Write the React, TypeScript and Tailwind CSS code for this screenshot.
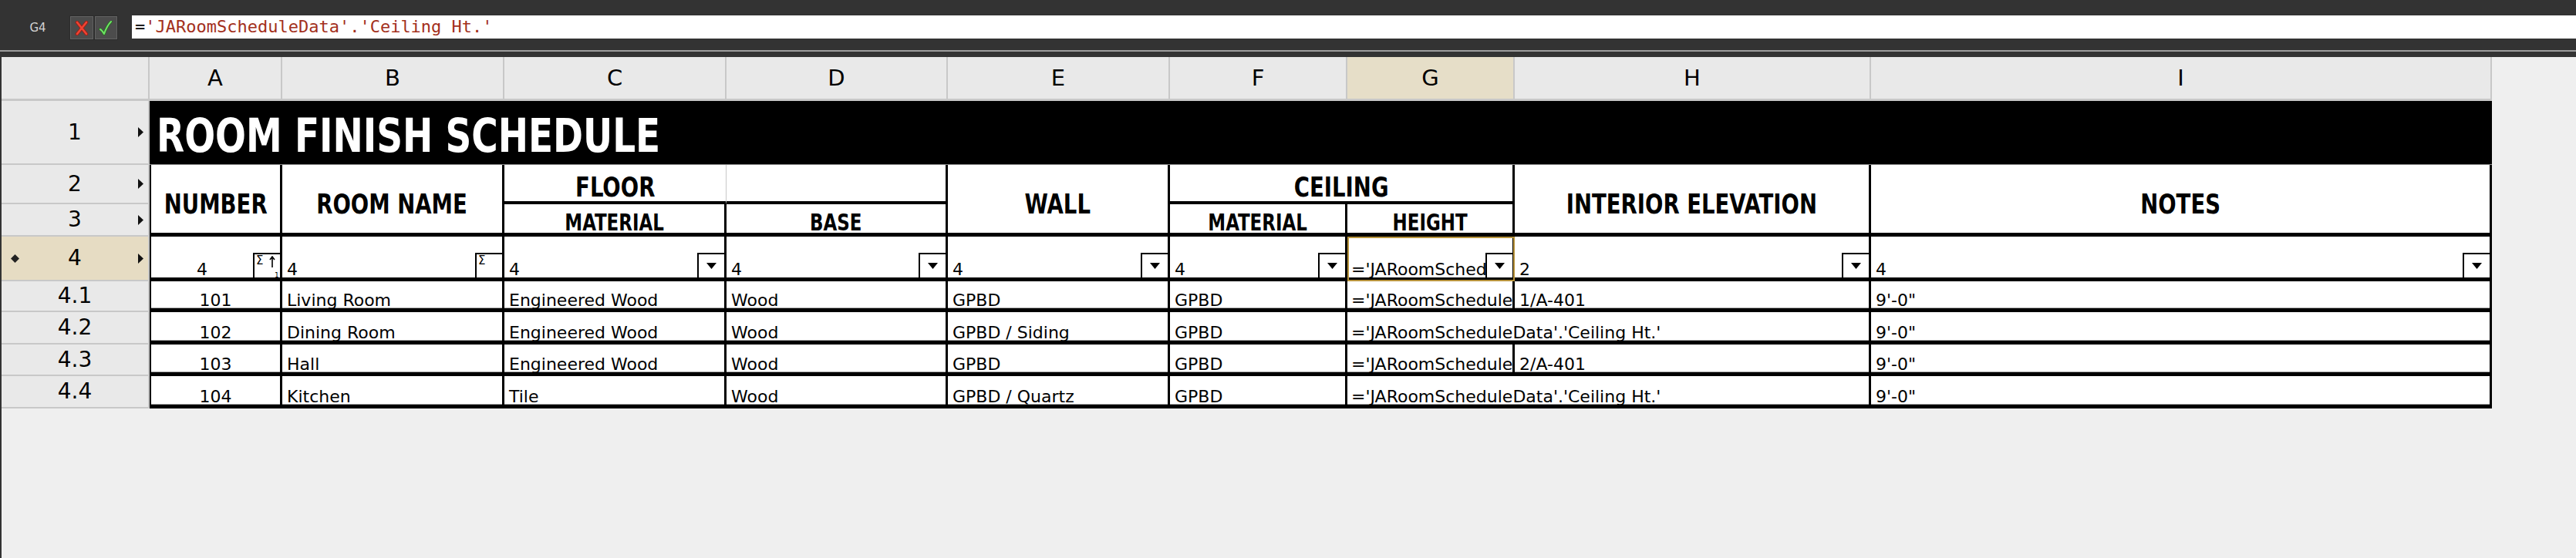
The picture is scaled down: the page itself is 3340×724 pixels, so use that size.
import React from "react";

// fonts: body text is DejaVu, header labels are condensed bold squeezed a bit more
const HEAD =
  "font-['DejaVu_Sans_Condensed','DejaVu_Sans',sans-serif] font-bold text-black leading-none whitespace-nowrap inline-block scale-x-[0.85]";
const BODY =
  "font-['DejaVu_Sans',sans-serif] text-[22px] text-black leading-none whitespace-nowrap";
const GRIDFONT = "font-['DejaVu_Sans',sans-serif] leading-none text-black";

const cell =
  "relative flex overflow-hidden bg-white border-r-[3px] border-b-[5px] border-black";
const line = "shadow-[inset_0_-1px_0_#a8a8a8]";

const FORMULA = "='JARoomScheduleData'.'Ceiling Ht.'";

type Room = {
  row: string;
  label: string;
  num: string;
  name: string;
  floor: string;
  base: string;
  wall: string;
  ceil: string;
  elev: string;
  notes: string;
};

const rooms: Room[] = [
  { row: "row-start-6", label: "4.1", num: "101", name: "Living Room", floor: "Engineered Wood", base: "Wood", wall: "GPBD", ceil: "GPBD", elev: "1/A-401", notes: `9'-0"` },
  { row: "row-start-7", label: "4.2", num: "102", name: "Dining Room", floor: "Engineered Wood", base: "Wood", wall: "GPBD / Siding", ceil: "GPBD", elev: "", notes: `9'-0"` },
  { row: "row-start-8", label: "4.3", num: "103", name: "Hall", floor: "Engineered Wood", base: "Wood", wall: "GPBD", ceil: "GPBD", elev: "2/A-401", notes: `9'-0"` },
  { row: "row-start-9", label: "4.4", num: "104", name: "Kitchen", floor: "Tile", base: "Wood", wall: "GPBD / Quartz", ceil: "GPBD", elev: "", notes: `9'-0"` },
];

const colHeads = [
  { l: "A", c: "col-start-2" },
  { l: "B", c: "col-start-3" },
  { l: "C", c: "col-start-4" },
  { l: "D", c: "col-start-5" },
  { l: "E", c: "col-start-6" },
  { l: "F", c: "col-start-7" },
  { l: "G", c: "col-start-8" },
  { l: "H", c: "col-start-9" },
  { l: "I", c: "col-start-10" },
];

function Arrow() {
  return (
    <svg className="absolute right-[6px]" width="7" height="13" viewBox="0 0 7 13">
      <path d="M0 0L7 6.5L0 13z" fill="#111" />
    </svg>
  );
}

function RowHead({ row, label, arrow, active }: { row: string; label: string; arrow?: boolean; active?: boolean }) {
  return (
    <div
      className={`${row} col-start-1 relative flex items-center justify-center border-r-2 border-b-2 border-[#c8c8c8] ${
        active ? "bg-[#e6dcc3]" : "bg-[#e9e9e9]"
      }`}
    >
      {active && (
        <svg className="absolute left-[12px]" width="11" height="11" viewBox="0 0 11 11">
          <path d="M5.5 0L11 5.5L5.5 11L0 5.5z" fill="#222" />
        </svg>
      )}
      <span className={`${GRIDFONT} text-[28px]`}>{label}</span>
      {arrow && <Arrow />}
    </div>
  );
}

function DropButton({ kind }: { kind?: "sort" | "sum" }) {
  return (
    <div className="absolute right-0 bottom-0 w-[35px] h-[32px] bg-white border-l-2 border-t-2 border-black flex items-center justify-center">
      {kind === undefined && (
        <svg width="13" height="8" viewBox="0 0 13 8">
          <path d="M0 0h13L6.5 8z" fill="#000" />
        </svg>
      )}
      {kind === "sum" && (
        <span className="absolute left-[2px] top-[1px] font-['DejaVu_Sans',sans-serif] text-[15px] leading-none">Σ</span>
      )}
      {kind === "sort" && (
        <>
          <span className="absolute left-[2px] top-[1px] font-['DejaVu_Sans',sans-serif] text-[15px] leading-none">Σ</span>
          <svg className="absolute left-[19px] top-[2px]" width="8" height="16" viewBox="0 0 8 16">
            <path d="M4 1V15M1 5L4 1L7 5" fill="none" stroke="#000" strokeWidth="1.6" />
          </svg>
          <span className="absolute left-[26px] bottom-[-2px] font-['DejaVu_Sans',sans-serif] text-[9px] leading-none">1</span>
        </>
      )}
    </div>
  );
}

function Toolbar() {
  return (
    <div className="flex flex-col">
      <div className="h-[65px] bg-[#333333] flex items-start pt-[20px]">
        <div className="w-[90px] h-[32px] flex items-center justify-center pl-[8px] font-['DejaVu_Sans',sans-serif] text-[15px] text-[#d4d4d4]">
          G4
        </div>
        <div className="w-[63px] h-[32px] flex gap-[2px] p-[1px] bg-[#2c2c2c]">
          <div className="flex-1 bg-[#4c4c4c] border border-[#626262] flex items-center justify-center">
            <svg width="18" height="19" viewBox="0 0 18 19">
              <path d="M3 2L15 17M15 2L3 17" stroke="#9b1d14" strokeWidth="4.4" strokeLinecap="round" />
              <path d="M3 2L15 17M15 2L3 17" stroke="#ee4433" strokeWidth="2.6" strokeLinecap="round" />
            </svg>
          </div>
          <div className="flex-1 bg-[#4c4c4c] border border-[#626262] flex items-center justify-center">
            <svg width="18" height="19" viewBox="0 0 18 19">
              <path d="M2 11C4 12 5.5 14.5 7 17C9 11 12 5 16 1" fill="none" stroke="#2a6a22" strokeWidth="3.6" strokeLinecap="round" strokeLinejoin="round" />
              <path d="M2 11C4 12 5.5 14.5 7 17C9 11 12 5 16 1" fill="none" stroke="#6ee265" strokeWidth="2" strokeLinecap="round" strokeLinejoin="round" />
            </svg>
          </div>
        </div>
        <div className="ml-[18px] flex-1 h-[30px] bg-white pl-[4px] font-['DejaVu_Sans_Mono',monospace] text-[22px] leading-[30px] whitespace-nowrap">
          <span className="text-black">=</span>
          <span className="text-[#a3301c]">{FORMULA.slice(1)}</span>
        </div>
      </div>
      <div className="h-[2px] bg-[#9c9c9c]" />
      <div className="h-[7px] bg-[#333333]" />
    </div>
  );
}

export default function App() {
  return (
    <div className="w-[3340px] h-[724px] overflow-hidden bg-[#efefef] flex flex-col">
      <Toolbar />
      <div className="flex-1 border-l-2 border-[#333333]">
        <div className="grid grid-cols-[192px_172px_288px_288px_287px_288px_230px_217px_462px_805px_1fr] grid-rows-[57px_83px_51px_42px_58px_40px_42px_41px_42px]">
          {/* column headers */}
          <div className="col-start-1 row-start-1 bg-[#e9e9e9] border-r-2 border-b-[3px] border-[#c8c8c8]" />
          {colHeads.map((h) => (
            <div
              key={h.l}
              className={`${h.c} row-start-1 flex items-center justify-center border-r-2 border-b-[3px] border-[#c8c8c8] ${
                h.l === "G" ? "bg-[#e6dec8]" : "bg-[#e9e9e9]"
              }`}
            >
              <span className={`${GRIDFONT} text-[29px]`}>{h.l}</span>
            </div>
          ))}

          {/* row headers */}
          <RowHead row="row-start-2" label="1" arrow />
          <RowHead row="row-start-3" label="2" arrow />
          <RowHead row="row-start-4" label="3" arrow />
          <RowHead row="row-start-5" label="4" arrow active />
          {rooms.map((r) => (
            <RowHead key={r.label} row={r.row} label={r.label} />
          ))}

          {/* title */}
          <div className="col-start-2 col-span-9 row-start-2 bg-black border-b border-[#8a8a8a] flex items-end pl-[9px] pb-[7px]">
            <span className={`${HEAD} text-[61px] text-white origin-left scale-x-[0.855]`}>ROOM FINISH SCHEDULE</span>
          </div>

          {/* header rows 2-3 */}
          <div className={`${cell} col-start-2 row-start-3 row-span-2 border-l-2 items-end justify-center pb-[19px]`}>
            <span className={`${HEAD} text-[36px]`}>NUMBER</span>
          </div>
          <div className={`${cell} col-start-3 row-start-3 row-span-2 items-end justify-center pb-[19px]`}>
            <span className={`${HEAD} text-[36px]`}>ROOM NAME</span>
          </div>
          <div className="col-start-4 row-start-3 relative flex overflow-visible bg-white border-r border-r-[#c8c8c8] border-b-4 border-b-black items-end justify-center">
            <span className={`${HEAD} text-[36px]`}>FLOOR</span>
          </div>
          <div className="col-start-5 row-start-3 bg-white border-r-[3px] border-b-4 border-black" />
          <div className={`${cell} col-start-6 row-start-3 row-span-2 items-end justify-center pb-[19px]`}>
            <span className={`${HEAD} text-[36px]`}>WALL</span>
          </div>
          <div className="col-start-7 col-span-2 row-start-3 flex bg-white border-r-[3px] border-b-4 border-black items-end justify-center">
            <span className={`${HEAD} text-[36px]`}>CEILING</span>
          </div>
          <div className={`${cell} col-start-9 row-start-3 row-span-2 items-end justify-center pb-[19px]`}>
            <span className={`${HEAD} text-[36px]`}>INTERIOR ELEVATION</span>
          </div>
          <div className={`${cell} col-start-10 row-start-3 row-span-2 items-end justify-center pb-[19px]`}>
            <span className={`${HEAD} text-[36px]`}>NOTES</span>
          </div>
          <div className={`${cell} col-start-4 row-start-4 items-end justify-center`}>
            <span className={`${HEAD} text-[30px] mb-[-2px]`}>MATERIAL</span>
          </div>
          <div className={`${cell} col-start-5 row-start-4 items-end justify-center`}>
            <span className={`${HEAD} text-[30px] mb-[-2px]`}>BASE</span>
          </div>
          <div className={`${cell} col-start-7 row-start-4 items-end justify-center`}>
            <span className={`${HEAD} text-[30px] mb-[-2px]`}>MATERIAL</span>
          </div>
          <div className={`${cell} col-start-8 row-start-4 items-end justify-center`}>
            <span className={`${HEAD} text-[30px] mb-[-2px]`}>HEIGHT</span>
          </div>

          {/* filter row */}
          <div className={`${cell} col-start-2 row-start-5 border-l-2 bg-[#ebebeb] items-end justify-center pr-[35px]`}>
            <span className={`${BODY} mb-[-1px]`}>4</span>
            <DropButton kind="sort" />
          </div>
          <div className={`${cell} col-start-3 row-start-5 bg-[#ebebeb] items-end pl-[6px]`}>
            <span className={`${BODY} mb-[-1px]`}>4</span>
            <DropButton kind="sum" />
          </div>
          <div className={`${cell} col-start-4 row-start-5 bg-[#ebebeb] items-end pl-[6px]`}>
            <span className={`${BODY} mb-[-1px]`}>4</span>
            <DropButton />
          </div>
          <div className={`${cell} col-start-5 row-start-5 bg-[#ebebeb] items-end pl-[6px]`}>
            <span className={`${BODY} mb-[-1px]`}>4</span>
            <DropButton />
          </div>
          <div className={`${cell} col-start-6 row-start-5 bg-[#ebebeb] items-end pl-[6px]`}>
            <span className={`${BODY} mb-[-1px]`}>4</span>
            <DropButton />
          </div>
          <div className={`${cell} col-start-7 row-start-5 bg-[#ebebeb] items-end pl-[6px]`}>
            <span className={`${BODY} mb-[-1px]`}>4</span>
            <DropButton />
          </div>
          <div className={`${cell} col-start-8 row-start-5 bg-[#ebebeb] items-end pl-[5px] outline-2 -outline-offset-2 outline-[#b8943c]`}>
            <span className={`${BODY} mb-[-1px]`}>{FORMULA}</span>
            <DropButton />
          </div>
          <div className={`${cell} col-start-9 row-start-5 bg-[#ebebeb] items-end pl-[6px]`}>
            <span className={`${BODY} mb-[-1px]`}>2</span>
            <DropButton />
          </div>
          <div className={`${cell} col-start-10 row-start-5 bg-[#ebebeb] items-end pl-[6px]`}>
            <span className={`${BODY} mb-[-1px]`}>4</span>
            <DropButton />
          </div>

          {/* data rows */}
          {rooms.map((r) => (
            <React.Fragment key={r.num}>
              <div className={`${cell} ${line} ${r.row} col-start-2 border-l-2 items-end justify-center`}>
                <span className={`${BODY} mb-[-1px]`}>{r.num}</span>
              </div>
              <div className={`${cell} ${line} ${r.row} col-start-3 items-end pl-[6px]`}>
                <span className={`${BODY} mb-[-1px]`}>{r.name}</span>
              </div>
              <div className={`${cell} ${line} ${r.row} col-start-4 items-end pl-[6px]`}>
                <span className={`${BODY} mb-[-1px]`}>{r.floor}</span>
              </div>
              <div className={`${cell} ${line} ${r.row} col-start-5 items-end pl-[6px]`}>
                <span className={`${BODY} mb-[-1px]`}>{r.base}</span>
              </div>
              <div className={`${cell} ${line} ${r.row} col-start-6 items-end pl-[6px]`}>
                <span className={`${BODY} mb-[-1px]`}>{r.wall}</span>
              </div>
              <div className={`${cell} ${line} ${r.row} col-start-7 items-end pl-[6px]`}>
                <span className={`${BODY} mb-[-1px]`}>{r.ceil}</span>
              </div>
              {r.elev ? (
                <>
                  <div className={`${cell} ${line} ${r.row} col-start-8 items-end pl-[5px]`}>
                    <span className={`${BODY} mb-[-1px]`}>{FORMULA}</span>
                  </div>
                  <div className={`${cell} ${line} ${r.row} col-start-9 items-end pl-[6px]`}>
                    <span className={`${BODY} mb-[-1px]`}>{r.elev}</span>
                  </div>
                </>
              ) : (
                <div className={`${cell} ${line} ${r.row} col-start-8 col-span-2 items-end pl-[5px]`}>
                  <span className={`${BODY} mb-[-1px]`}>{FORMULA}</span>
                </div>
              )}
              <div className={`${cell} ${line} ${r.row} col-start-10 items-end pl-[6px]`}>
                <span className={`${BODY} mb-[-1px]`}>{r.notes}</span>
              </div>
            </React.Fragment>
          ))}
        </div>
      </div>
    </div>
  );
}
